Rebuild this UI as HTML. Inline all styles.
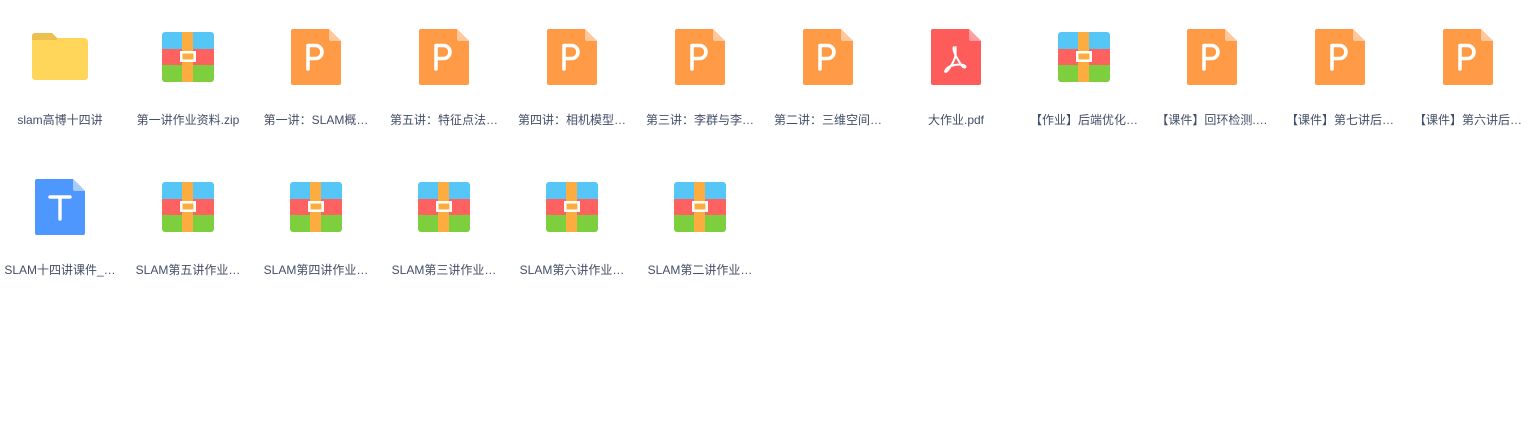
<!DOCTYPE html>
<html><head><meta charset="utf-8"><style>
body{margin:0;background:#fff;width:1535px;height:438px;overflow:hidden;position:relative;font-family:"Liberation Sans","Noto Sans CJK SC",sans-serif}
.c{position:absolute;width:128px;height:150px}
.c svg{position:absolute;left:0;top:0}
.l{position:absolute;left:0;top:112px;width:120px;text-align:center;font-size:12px;color:#424e67;white-space:nowrap;line-height:16px}
</style></head><body>
<svg width="0" height="0" style="position:absolute"><defs>
<g id="fold"><path d="M32 36a3 3 0 0 1 3-3h17l5 5h27a4 4 0 0 1 4 4v35a3 3 0 0 1-3 3H35a3 3 0 0 1-3-3z" fill="#ffd659"/><path d="M32 36a3 3 0 0 1 3-3h17l5 5v2H32z" fill="#ebc04e"/></g>
<g id="zip"><path d="M37 32h46a3 3 0 0 1 3 3v14H34V35a3 3 0 0 1 3-3z" fill="#55c6f6"/><rect x="34" y="49" width="52" height="16" fill="#fd6261"/><path d="M34 65h52v14a3 3 0 0 1-3 3H37a3 3 0 0 1-3-3z" fill="#7dcf3e"/><rect x="54" y="32" width="11" height="50" fill="#fdad40"/><rect x="52" y="51" width="16" height="11" fill="#fff"/><rect x="54.5" y="53.5" width="11" height="6" fill="#fdad40"/></g>
</defs></svg>
<div class="c" style="left:0;top:0"><svg width="128" height="150"><use href="#fold"/></svg><div class="l">slam高博十四讲</div></div>
<div class="c" style="left:128px;top:0"><svg width="128" height="150"><use href="#zip"/></svg><div class="l">第一讲作业资料.zip</div></div>
<script>
var ppt='<svg width="128" height="150"><path d="M37 29h36l12 12v42a2 2 0 0 1-2 2H37a2 2 0 0 1-2-2V31a2 2 0 0 1 2-2z" fill="#ff9a46"/><path d="M73 29l12 12H75a2 2 0 0 1-2-2z" fill="#ffc89a"/><path d="M52 69V45.5h7.5a6.5 6.5 0 0 1 0 13H52" fill="none" stroke="#fff" stroke-width="3.6" stroke-linecap="round" stroke-linejoin="round"/></svg>';
var pdf='<svg width="128" height="150"><path d="M37 29h36l12 12v42a2 2 0 0 1-2 2H37a2 2 0 0 1-2-2V31a2 2 0 0 1 2-2z" fill="#fe5b5b"/><path d="M73 29l12 12H75a2 2 0 0 1-2-2z" fill="#ffa0a0"/><path d="M58.5 47c-2 0-1 5 2.5 11s5.5 9.5 7.5 9.5 1-3-5-3-11.5 2-13.5 5 0 3.5 2.5 0 6-9 7-14-1-8.5 1-8.5" fill="none" stroke="#fff" stroke-width="2" stroke-linejoin="round"/></svg>';
var txt='<svg width="128" height="150"><path d="M37 29h36l12 12v42a2 2 0 0 1-2 2H37a2 2 0 0 1-2-2V31a2 2 0 0 1 2-2z" fill="#4d97ff"/><path d="M73 29l12 12H75a2 2 0 0 1-2-2z" fill="#a6cbff"/><path d="M50 47h20M60 47v22" stroke="#fff" stroke-width="3.4" stroke-linecap="round"/></svg>';
var zip='<svg width="128" height="150"><use href="#zip"/></svg>';
var r1=[[ppt,'第一讲：SLAM概…'],[ppt,'第五讲：特征点法…'],[ppt,'第四讲：相机模型…'],[ppt,'第三讲：李群与李…'],[ppt,'第二讲：三维空间…'],[pdf,'大作业.pdf'],[zip,'【作业】后端优化…'],[ppt,'【课件】回环检测.…'],[ppt,'【课件】第七讲后…'],[ppt,'【课件】第六讲后…']];
var h='';
r1.forEach(function(a,i){h+='<div class="c" style="left:'+((i+2)*128)+'px;top:0">'+a[0]+'<div class="l">'+a[1]+'</div></div>';});
var r2=[[txt,'SLAM十四讲课件_…'],[zip,'SLAM第五讲作业…'],[zip,'SLAM第四讲作业…'],[zip,'SLAM第三讲作业…'],[zip,'SLAM第六讲作业…'],[zip,'SLAM第二讲作业…']];
r2.forEach(function(a,i){h+='<div class="c" style="left:'+(i*128)+'px;top:150px">'+a[0]+'<div class="l">'+a[1]+'</div></div>';});
document.write(h);
</script>
</body></html>
